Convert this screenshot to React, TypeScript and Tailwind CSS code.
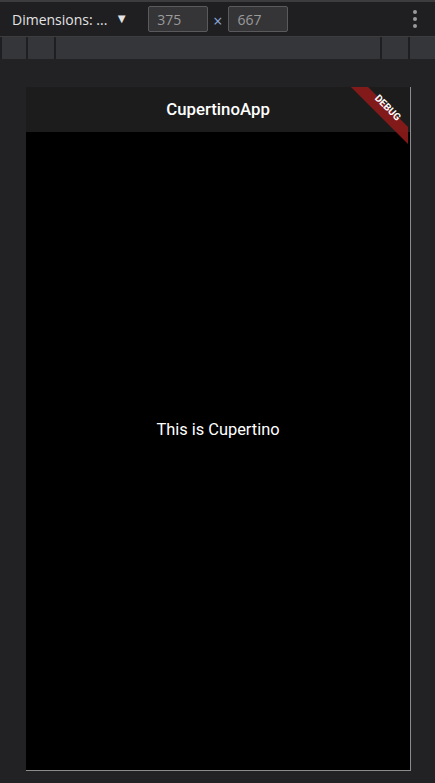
import React from "react";

export default function App() {
  return (
    <div
      className="w-[435px] h-[783px] bg-[#222224] flex flex-col overflow-hidden"
      style={{ fontFamily: "'Open Sans', 'Noto Sans', sans-serif" }}
    >
      <div className="h-[2px] bg-[#3c3c3e]" />
      <div className="h-[34px] bg-[#1f1f21] flex items-center relative">
        <span className="ml-[12px] text-[14px] text-[#e3e3e3] tracking-[0px]">Dimensions: ...</span>
        <span className="ml-[8px] text-[13px] text-[#e3e3e3]">▼</span>
        <div className="ml-[20px] w-[60px] h-[26px] bg-[#353537] border border-[#5a5a5c] rounded-[2px] flex items-center pl-[8px] text-[14px] text-[#9a9a9c]">
          375
        </div>
        <span className="ml-[5px] mr-[6px] text-[16px] text-[#8aa8d8] mt-[4px]">×</span>
        <div className="w-[60px] h-[26px] bg-[#353537] border border-[#5a5a5c] rounded-[2px] flex items-center pl-[8px] text-[14px] text-[#9a9a9c]">
          667
        </div>
        <div className="ml-auto mr-[18px] flex flex-col gap-[3px]">
          <span className="w-[4px] h-[4px] rounded-full bg-[#9a9a9c]" />
          <span className="w-[4px] h-[4px] rounded-full bg-[#9a9a9c]" />
          <span className="w-[4px] h-[4px] rounded-full bg-[#9a9a9c]" />
        </div>
      </div>
      <div className="h-[1px] bg-[#3c3c3e]" />
      <div className="h-[22px] flex bg-[#1f1f21] pl-[2px]">
        <div className="w-[24px] bg-[#35363a]" />
        <div className="w-[2px]" />
        <div className="w-[26px] bg-[#35363a]" />
        <div className="w-[2px]" />
        <div className="flex-1 bg-[#35363a]" />
        <div className="w-[2px]" />
        <div className="w-[26px] bg-[#35363a]" />
        <div className="w-[2px]" />
        <div className="w-[25px] bg-[#35363a]" />
      </div>
      <div className="pt-[28px] pl-[26px]">
        <div
          className="relative w-[385px] h-[684px] border-r border-b border-[#8c8c8c] flex flex-col overflow-hidden"
          style={{ fontFamily: "Roboto, 'Noto Sans', sans-serif" }}
        >
          <div className="h-[45px] bg-[#1c1c1c] flex items-center justify-center">
            <span className="text-white text-[16.8px] font-medium">CupertinoApp</span>
          </div>
          <div className="flex-1 bg-black flex items-center justify-center pb-[41px]">
            <span className="text-white text-[16.4px]">This is Cupertino</span>
          </div>
          <svg
            className="absolute top-0 right-0"
            width="60"
            height="60"
            viewBox="0 0 60 60"
          >
            <polygon points="1,0 18,0 58,40 58,57" fill="#8b1a1a" fillOpacity="0.92" />
            <text
              x="0"
              y="0"
              fill="white"
              fontSize="10"
              fontWeight="700"
              fontFamily="Roboto, sans-serif"
              textAnchor="middle"
              transform="translate(35.5 23) rotate(45)"
            >
              DEBUG
            </text>
          </svg>
        </div>
      </div>
    </div>
  );
}
